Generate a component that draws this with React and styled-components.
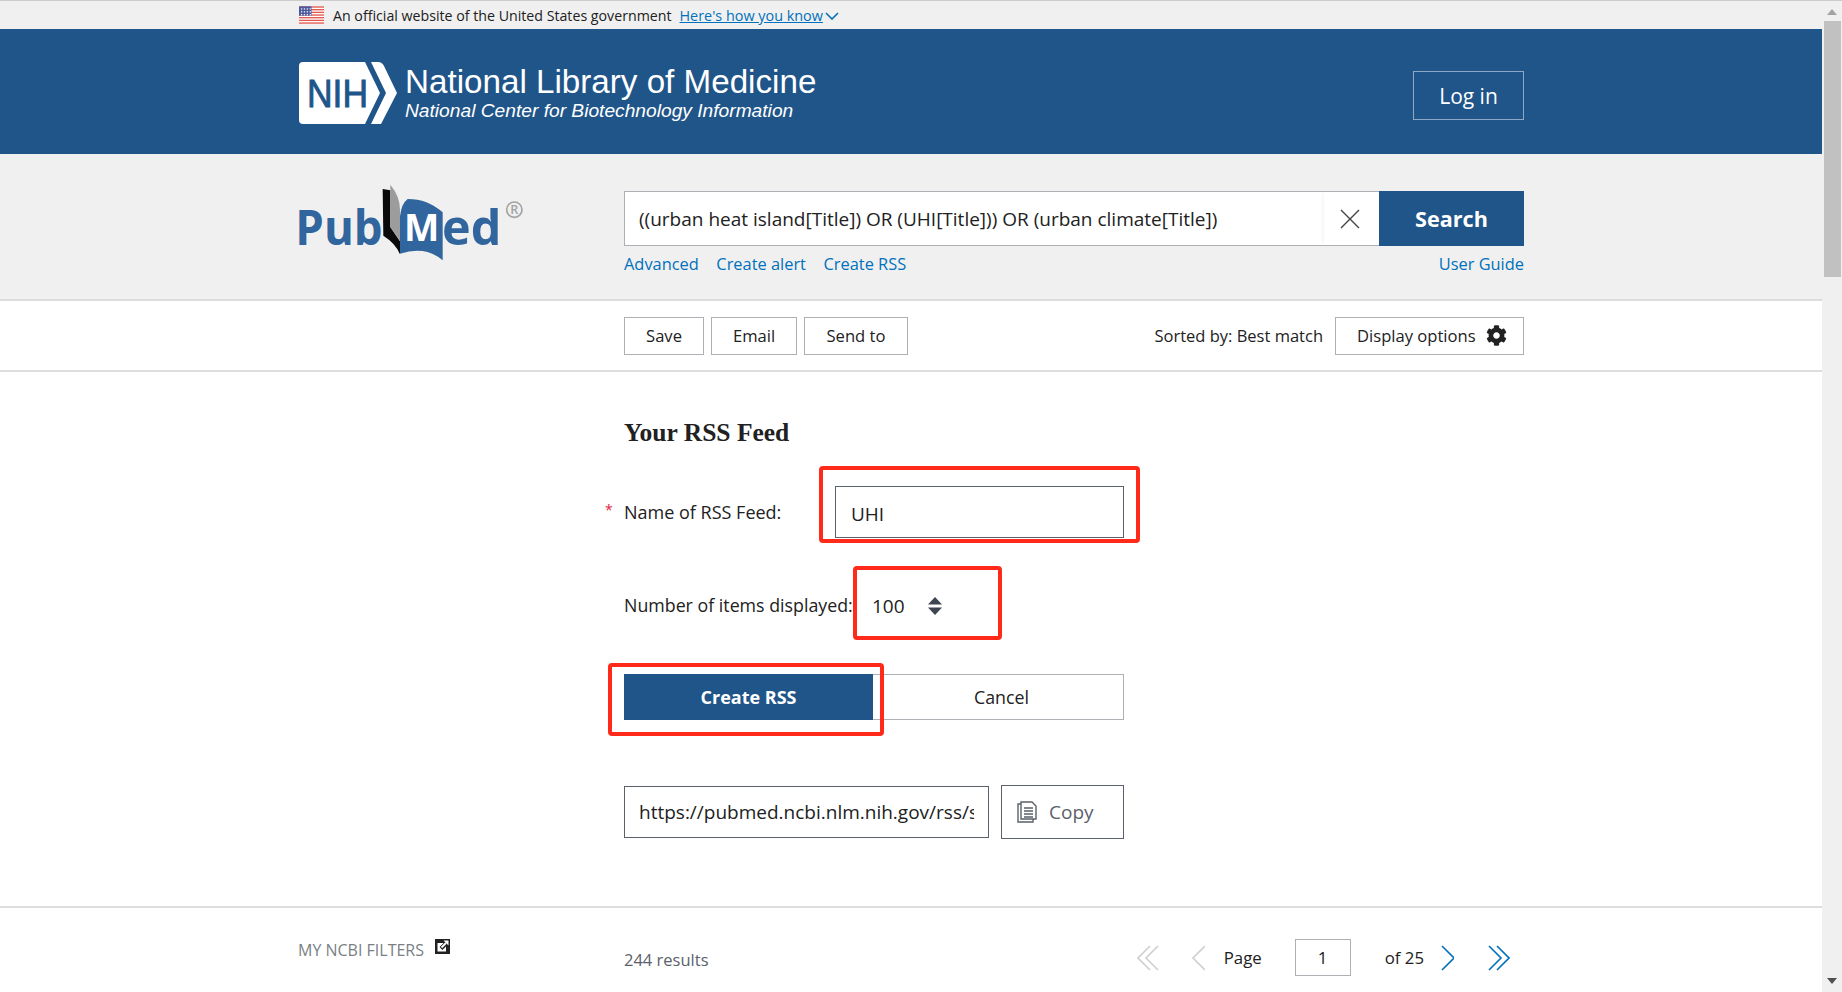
import React from "react";
import styled, { createGlobalStyle } from "styled-components";
import { FaCog } from "react-icons/fa";

const GlobalStyle = createGlobalStyle`
  * { box-sizing: border-box; }
  html, body { margin: 0; height: 100%; overflow: hidden; background: #fff; }
  body { font-family: "Open Sans", "Noto Sans", sans-serif; color: #212121; }
`;

const Page = styled.div`
  display: flex;
  height: 992px;
  border-top: 1px solid #ccc;
`;
const Main = styled.div`
  flex: 1;
  min-width: 0;
`;
const Container = styled.div`
  width: 1226px;
  margin: 0 auto;
`;

/* scrollbar */
const Scrollbar = styled.div`
  width: 20px;
  background: #f0f0f0;
  position: relative;
  display: flex;
  flex-direction: column;
  align-items: center;
`;
const ScrollArrow = styled.div`
  width: 0;
  height: 0;
  margin-top: ${(p) => p.$top}px;
  border-left: 5px solid transparent;
  border-right: 5px solid transparent;
  ${(p) =>
    p.$down
      ? "border-top: 6px solid #505050;"
      : "border-bottom: 6px solid #a3a3a3;"}
`;
const Thumb = styled.div`
  width: 17px;
  height: 256px;
  margin-top: 6px;
  background: #c1c1c1;
`;

/* gov banner */
const Banner = styled.div`
  height: 28px;
  background: #f0f0f0;
`;
const BannerRow = styled(Container)`
  display: flex;
  align-items: center;
  height: 28px;
  padding-left: 1px;
  font-size: 14.2px;
`;
const BannerText = styled.span`
  margin-left: 9px;
  margin-top: 1px;
`;
const BannerLink = styled.a`
  margin-left: 8px;
  color: #0071bc;
  font-size: 14.4px;
  text-decoration: underline;
`;
const BannerChevron = styled.svg`
  margin: 2px 0 0 2px;
`;

/* NLM header */
const Header = styled.header`
  height: 125px;
  background: #20558a;
`;
const HeaderRow = styled(Container)`
  display: flex;
  align-items: flex-start;
  height: 125px;
  padding: 33px 0 0 1px;
`;
const NihSvg = styled.svg`
  flex: none;
`;
const NlmText = styled.div`
  margin-left: 8px;
  color: #fff;
  font-family: "Liberation Sans", Arial, sans-serif;
  flex: 1;
`;
const NlmTitle = styled.div`
  font-size: 33.2px;
  line-height: 40px;
`;
const NlmSub = styled.div`
  font-size: 19.2px;
  line-height: 18px;
  font-style: italic;
`;
const LoginButton = styled.button`
  width: 111px;
  height: 49px;
  margin-top: 9px;
  background: transparent;
  border: 1px solid #8fa9c4;
  color: #fff;
  font: 21px "Open Sans", sans-serif;
`;

/* search band */
const SearchBand = styled.div`
  height: 147px;
  background: #f0f0f0;
  border-bottom: 2px solid #ddd;
`;
const SearchRow = styled(Container)`
  display: flex;
  padding-top: 37px;
`;
const LogoCol = styled.div`
  width: 326px;
  margin-top: -8px;
  margin-left: -2px;
`;
const SearchCol = styled.div`
  flex: 1;
  margin-left: 2px;
`;
const SearchBox = styled.div`
  display: flex;
  height: 55px;
`;
const SearchInput = styled.input`
  flex: 1;
  min-width: 0;
  height: 55px;
  border: 1px solid #aeb0b5;
  border-right: none;
  padding: 0 14px;
  background: #fff;
  color: #212121;
  font: 19px "Open Sans", sans-serif;
  outline: none;
`;
const ClearBox = styled.div`
  width: 55px;
  height: 55px;
  padding-right: 4px;
  display: flex;
  align-items: center;
  justify-content: center;
  background: #fff;
  border-top: 1px solid #aeb0b5;
  border-bottom: 1px solid #aeb0b5;
  box-shadow: -3px 0 4px -2px rgba(0, 0, 0, 0.06);
`;
const SearchButton = styled.button`
  width: 145px;
  height: 55px;
  background: #20558a;
  border: none;
  color: #fff;
  font: 700 21.6px "Open Sans", sans-serif;
`;
const LinkRow = styled.div`
  display: flex;
  gap: 17.5px;
  margin-top: 7px;
  font-size: 16.4px;
  line-height: 22px;
`;
const TextLink = styled.a`
  color: #0071bc;
  margin-left: ${(p) => (p.$push ? "auto" : "0")};
`;

/* toolbar */
const Toolbar = styled.div`
  height: 71px;
  border-bottom: 2px solid #ddd;
`;
const ToolbarRow = styled(Container)`
  display: flex;
  align-items: center;
  height: 69px;
  padding-left: 326px;
`;
const ToolButton = styled.button`
  height: 38px;
  width: ${(p) => p.$w}px;
  margin-right: 7px;
  background: #fff;
  border: 1px solid #aeb0b5;
  color: #212121;
  font: 16.6px "Open Sans", sans-serif;
  padding: 0;
`;
const SortedBy = styled.span`
  margin-left: auto;
  margin-right: 12px;
  font-size: 16.5px;
`;
const DisplayButton = styled(ToolButton)`
  display: flex;
  align-items: center;
  gap: 10px;
  padding-left: 21px;
  margin-right: 0;
`;

/* form */
const FormArea = styled.div`
  height: 534px;
`;
const Form = styled(Container)`
  padding: 45px 0 0 326px;
`;
const FormInner = styled.div`
  width: 500px;
`;
const Heading = styled.h2`
  margin: 0;
  font: 700 25.5px/32px "Liberation Serif", serif;
  color: #212121;
`;
const NameRow = styled.div`
  display: flex;
  align-items: center;
  margin-top: 37px;
  position: relative;
`;
const ItemsRow = styled.div`
  display: flex;
  align-items: center;
  margin-top: 48px;
`;
const Label = styled.label`
  width: ${(p) => p.$w}px;
  font-size: ${(p) => p.$fs}px;
  position: relative;
  white-space: nowrap;
  margin-top: ${(p) => p.$mt || 0}px;
`;
const Required = styled.span`
  position: absolute;
  left: -19px;
  top: 0;
  color: #e31c3d;
  font-size: 14px;
`;
const Field = styled.div`
  position: relative;
  flex: ${(p) => (p.$grow ? 1 : "none")};
  width: ${(p) => (p.$w ? `${p.$w}px` : "auto")};
`;
const NameInput = styled.input`
  display: block;
  width: 100%;
  height: 52px;
  padding: 4px 15px 0;
  border: 1px solid #5b616b;
  background: #fff;
  color: #212121;
  font: 19px "Open Sans", sans-serif;
  outline: none;
`;
const SelectBox = styled.div`
  display: flex;
  align-items: center;
  height: 40px;
  padding-left: 19px;
  font-size: 19px;
`;
const SelectValue = styled.span`
  width: 56px;
`;
const Highlight = styled.div`
  position: absolute;
  top: ${(p) => p.$t}px;
  left: ${(p) => p.$l}px;
  right: ${(p) => p.$r}px;
  bottom: ${(p) => p.$b}px;
  border: 4px solid #ff2a1a;
  border-radius: 4px;
  pointer-events: none;
`;
const ButtonRow = styled.div`
  display: flex;
  margin-top: 48px;
`;
const PrimaryButton = styled.button`
  width: 100%;
  height: 46px;
  display: block;
  background: #20558a;
  border: none;
  color: #fff;
  font: 700 18px "Open Sans", sans-serif;
`;
const CancelButton = styled.button`
  flex: 1;
  height: 46px;
  padding-left: 13px;
  background: #fff;
  border: 1px solid #aeb0b5;
  border-left: none;
  color: #212121;
  font: 17.8px "Open Sans", sans-serif;
`;
const UrlRow = styled.div`
  display: flex;
  align-items: center;
  margin-top: 65px;
`;
const UrlInput = styled.input`
  width: 365px;
  height: 52px;
  padding: 0 14px;
  border: 1px solid #5b616b;
  background: #fff;
  color: #212121;
  font: 19px "Open Sans", sans-serif;
  outline: none;
`;
const CopyButton = styled.button`
  width: 123px;
  height: 54px;
  margin-left: 12px;
  display: flex;
  align-items: center;
  gap: 12px;
  padding: 0 0 0 15px;
  background: #fff;
  border: 1px solid #5b616b;
  color: #5b616b;
  font: 19px "Open Sans", sans-serif;
`;

/* footer */
const Footer = styled.div`
  border-top: 2px solid #ddd;
`;
const FooterRow = styled(Container)`
  display: flex;
  align-items: flex-start;
  padding-top: 31px;
`;
const FilterCol = styled.div`
  width: 326px;
  display: flex;
  align-items: flex-start;
  gap: 11px;
  color: #7a7f85;
  font-size: 16px;
`;
const Results = styled.div`
  flex: 1;
  margin-top: 9px;
  color: #5b616b;
  font-size: 16.5px;
`;
const Pager = styled.div`
  display: flex;
  align-items: center;
  height: 37px;
  padding-right: 14px;
  font-size: 16.8px;
`;
const PagerArrowSvg = styled.svg`
  margin-left: ${(p) => p.$ml}px;
  fill: none;
  stroke: ${(p) => (p.$off ? "#cfcfcf" : "#0071bc")};
  stroke-width: 1.6;
`;
const PagerText = styled.span`
  margin-left: ${(p) => p.$ml}px;
`;
const PageInput = styled.input`
  width: 56px;
  height: 37px;
  margin-left: 33px;
  border: 1px solid #aeb0b5;
  background: #fff;
  color: #212121;
  text-align: center;
  font: 17px "Open Sans", sans-serif;
  outline: none;
`;

function Flag() {
  const stripes = [0, 2, 4, 6, 8, 10, 12];
  return (
    <svg width="25" height="18" viewBox="0 0 26 18">
      <rect width="26" height="18" fill="#fff" />
      {stripes.map((i) => (
        <rect key={i} y={i * 1.39} width="26" height="1.39" fill="#e0584e" />
      ))}
      <rect width="13" height="9.7" fill="#4a5a9c" />
      <g fill="#e8ecf7">
        {[2, 5, 8, 11].map((x) =>
          [2, 5, 8].map((y) => <rect key={x + "-" + y} x={x} y={y} width="1.4" height="1.4" />)
        )}
      </g>
    </svg>
  );
}

function NihLogo() {
  return (
    <NihSvg width="98" height="62" viewBox="0 0 98 62">
      <path d="M4 0H66L81 31L66 62H4Q0 62 0 58V4Q0 0 4 0Z" fill="#fff" />
      <path d="M72 0H79Q83 0 85 4L98 31L82 62H72L87 31Z" fill="#fff" />
      <text
        x="8"
        y="45"
        textLength="61"
        lengthAdjust="spacingAndGlyphs"
        fill="#20558a"
        stroke="#20558a"
        strokeWidth="0.9"
        fontFamily="Liberation Sans, Arial, sans-serif"
        fontSize="39"
      >
        NIH
      </text>
    </NihSvg>
  );
}

function PubMedLogo() {
  return (
    <svg width="230" height="80" viewBox="50 40 690 240">
      <text x="48" y="225" textLength="262" lengthAdjust="spacingAndGlyphs" fill="#31659d" fontFamily="Open Sans, sans-serif" fontWeight="700" fontSize="146">
        Pub
      </text>
      <path d="M310 58L333 62V172L362 215V254Q350 222 312 198Z" fill="#0a0a0a" />
      <path d="M333 45Q362 80 362 120V215L333 172Z" fill="#9c9c9c" />
      <path d="M362 140Q366 102 385 88Q445 88 490 128V272Q440 228 362 252Z" fill="#31659d" />
      <text x="374" y="213" textLength="106" lengthAdjust="spacingAndGlyphs" fill="#fff" fontFamily="Open Sans, sans-serif" fontWeight="700" fontSize="115">
        M
      </text>
      <text x="488" y="225" textLength="178" lengthAdjust="spacingAndGlyphs" fill="#31659d" fontFamily="Open Sans, sans-serif" fontWeight="700" fontSize="146">
        ed
      </text>
      <circle cx="705" cy="120" r="23" fill="none" stroke="#a3a3a3" strokeWidth="5" />
      <text x="693" y="134" fill="#a3a3a3" fontFamily="Open Sans, sans-serif" fontWeight="600" fontSize="38">
        R
      </text>
    </svg>
  );
}

function ClearIcon() {
  return (
    <svg width="20" height="20" viewBox="0 0 20 20" fill="none" stroke="#444" strokeWidth="1.4">
      <path d="M1 1L19 19M19 1L1 19" />
    </svg>
  );
}

function SortIcon() {
  return (
    <svg width="14" height="18" viewBox="0 0 14 18" fill="#3d4551">
      <path d="M7 0L14 7.5H0Z" />
      <path d="M7 18L14 10.5H0Z" />
    </svg>
  );
}

function CopyIcon() {
  return (
    <svg width="20" height="22" viewBox="0 0 20 22" fill="#fff" stroke="#5b616b" strokeWidth="1.4">
      <path d="M4 3H1V21H16V18" />
      <path d="M4 1H15L19 5V18H4Z" />
      <path d="M7 7H16M7 10H16M7 13H16M7 16H16" strokeWidth="1.5" />
    </svg>
  );
}

function ExternalIcon() {
  return (
    <svg width="15" height="15" viewBox="0 0 15 15">
      <rect width="15" height="15" fill="#212121" />
      <rect x="2.5" y="4" width="8.5" height="8.5" fill="#fff" />
      <path d="M6 9.5L11 4.5" stroke="#212121" strokeWidth="4" />
      <path d="M6.5 8.5L11 4" stroke="#fff" strokeWidth="1.8" />
      <path d="M8.5 1.5H13.5V6.5Z" fill="#fff" />
    </svg>
  );
}

function PagerArrow({ left, double, off, ml }) {
  const w = double ? 22 : 13;
  const lines = double ? [0, 8] : [0];
  return (
    <PagerArrowSvg $ml={ml} $off={off} width={w} height="26" viewBox={`0 0 ${w} 26`}>
      {lines.map((dx) => (
        <path
          key={dx}
          d={left ? `M${13 + dx} 1L${1 + dx} 13L${13 + dx} 25` : `M${1 + dx} 1L${13 + dx} 13L${1 + dx} 25`}
        />
      ))}
    </PagerArrowSvg>
  );
}

export default function App() {
  return (
    <>
      <GlobalStyle />
      <Page>
        <Main>
          <Banner>
            <BannerRow>
              <Flag />
              <BannerText>An official website of the United States government</BannerText>
              <BannerLink>Here's how you know</BannerLink>
              <BannerChevron width="14" height="8" viewBox="0 0 14 8" fill="none" stroke="#0071bc" strokeWidth="1.6">
                <path d="M1 1L7 7L13 1" />
              </BannerChevron>
            </BannerRow>
          </Banner>
          <Header>
            <HeaderRow>
              <NihLogo />
              <NlmText>
                <NlmTitle>National Library of Medicine</NlmTitle>
                <NlmSub>National Center for Biotechnology Information</NlmSub>
              </NlmText>
              <LoginButton>Log in</LoginButton>
            </HeaderRow>
          </Header>
          <SearchBand>
            <SearchRow>
              <LogoCol>
                <PubMedLogo />
              </LogoCol>
              <SearchCol>
                <SearchBox>
                  <SearchInput readOnly value="((urban heat island[Title]) OR (UHI[Title])) OR (urban climate[Title])" />
                  <ClearBox>
                    <ClearIcon />
                  </ClearBox>
                  <SearchButton>Search</SearchButton>
                </SearchBox>
                <LinkRow>
                  <TextLink>Advanced</TextLink>
                  <TextLink>Create alert</TextLink>
                  <TextLink>Create RSS</TextLink>
                  <TextLink $push>User Guide</TextLink>
                </LinkRow>
              </SearchCol>
            </SearchRow>
          </SearchBand>
          <Toolbar>
            <ToolbarRow>
              <ToolButton $w={80}>Save</ToolButton>
              <ToolButton $w={86}>Email</ToolButton>
              <ToolButton $w={104}>Send to</ToolButton>
              <SortedBy>Sorted by: Best match</SortedBy>
              <DisplayButton $w={189}>
                Display options <FaCog size={21} color="#212121" />
              </DisplayButton>
            </ToolbarRow>
          </Toolbar>
          <FormArea>
            <Form>
              <FormInner>
                <Heading>Your RSS Feed</Heading>
                <NameRow>
                  <Label $w={211} $fs={18}>
                    <Required>*</Required>
                    Name of RSS Feed:
                  </Label>
                  <Field $grow>
                    <NameInput readOnly value="UHI" />
                    <Highlight $t={-20} $l={-16} $r={-16} $b={-5} />
                  </Field>
                </NameRow>
                <ItemsRow>
                  <Label $w={229} $fs={17.8} $mt={-2}>Number of items displayed:</Label>
                  <Field $w={149}>
                    <SelectBox>
                      <SelectValue>100</SelectValue>
                      <SortIcon />
                    </SelectBox>
                    <Highlight $t={-20} $l={0} $r={0} $b={-14} />
                  </Field>
                </ItemsRow>
                <ButtonRow>
                  <Field $w={249}>
                    <PrimaryButton>Create RSS</PrimaryButton>
                    <Highlight $t={-11} $l={-16} $r={-11} $b={-16} />
                  </Field>
                  <CancelButton>Cancel</CancelButton>
                </ButtonRow>
                <UrlRow>
                  <UrlInput readOnly value="https://pubmed.ncbi.nlm.nih.gov/rss/search/1Xq7pUHI/?limit=100" />
                  <CopyButton>
                    <CopyIcon />
                    Copy
                  </CopyButton>
                </UrlRow>
              </FormInner>
            </Form>
          </FormArea>
          <Footer>
            <FooterRow>
              <FilterCol>
                MY NCBI FILTERS
                <ExternalIcon />
              </FilterCol>
              <Results>244 results</Results>
              <Pager>
                <PagerArrow left double off ml={0} />
                <PagerArrow left off ml={33} />
                <PagerText $ml={19}>Page</PagerText>
                <PageInput readOnly value="1" />
                <PagerText $ml={34}>of 25</PagerText>
                <PagerArrow ml={17} />
                <PagerArrow double ml={34} />
              </Pager>
            </FooterRow>
          </Footer>
        </Main>
        <Scrollbar>
          <ScrollArrow $top={8} />
          <Thumb />
          <ScrollArrow $down $top={701} />
        </Scrollbar>
      </Page>
    </>
  );
}
